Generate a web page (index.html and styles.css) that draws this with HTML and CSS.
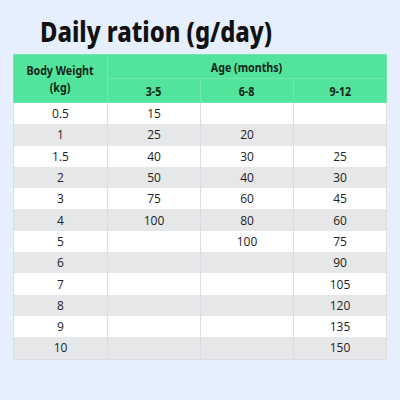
FILE: index.html
```html
<!DOCTYPE html>
<html lang="en">
<head>
    <meta charset="UTF-8">
    <meta name="viewport" content="width=device-width, initial-scale=1.0">
    <title>Daily ration</title>
    <link rel="stylesheet" href="styles.css">
</head>
<body>
    <div class="page">
        <h1 class="title"><span class="cond">Daily ration (g/day)</span></h1>
        <table class="ration">
            <thead>
                <tr>
                    <th rowspan="2" class="weight-head"><span class="cond">Body Weight<br>(kg)</span></th>
                    <th colspan="3"><span class="cond">Age (months)</span></th>
                </tr>
                <tr>
                    <th><span class="cond">3-5</span></th>
                    <th><span class="cond">6-8</span></th>
                    <th><span class="cond">9-12</span></th>
                </tr>
            </thead>
            <tbody>
                <tr><td>0.5</td><td>15</td><td></td><td></td></tr>
                <tr><td>1</td><td>25</td><td>20</td><td></td></tr>
                <tr><td>1.5</td><td>40</td><td>30</td><td>25</td></tr>
                <tr><td>2</td><td>50</td><td>40</td><td>30</td></tr>
                <tr><td>3</td><td>75</td><td>60</td><td>45</td></tr>
                <tr><td>4</td><td>100</td><td>80</td><td>60</td></tr>
                <tr><td>5</td><td></td><td>100</td><td>75</td></tr>
                <tr><td>6</td><td></td><td></td><td>90</td></tr>
                <tr><td>7</td><td></td><td></td><td>105</td></tr>
                <tr><td>8</td><td></td><td></td><td>120</td></tr>
                <tr><td>9</td><td></td><td></td><td>135</td></tr>
                <tr><td>10</td><td></td><td></td><td>150</td></tr>
            </tbody>
        </table>
    </div>
</body>
</html>
```

FILE: styles.css
```css
body {
    margin: 0;
    padding: 0;
    background-color: #e6effd;
    font-family: "Open Sans", "Noto Sans", sans-serif;
    color: #222;
}
.page {
    width: 400px;
    height: 400px;
    padding: 14px 13px 0;
    box-sizing: border-box;
}
.cond {
    display: inline-block;
    transform: scaleX(0.82);
}
.title {
    margin: 0 0 6px 27px;
    font-family: "Noto Sans", sans-serif;
    font-size: 29px;
    font-weight: 800;
    line-height: 34px;
    color: #111;
}
.title .cond {
    transform-origin: left center;
}
.ration {
    width: 374px;
    border-collapse: collapse;
    table-layout: fixed;
    font-size: 12px;
    border: 1px solid #dcdde0;
}
.ration th {
    background: #52e39d;
    color: #10261a;
    font-family: "Noto Sans", sans-serif;
    font-weight: 700;
    font-size: 13px;
    height: 23px;
    padding: 0;
    border: 1px solid #6ee8ad;
    white-space: nowrap;
}
.ration .weight-head {
    width: 93px;
    line-height: 17px;
}
.ration td {
    text-align: center;
    height: 21.3px;
    padding: 0;
    border-left: 1px solid #dcdde0;
    border-right: 1px solid #dcdde0;
    background: #fff;
}
.ration tbody tr:nth-child(even) td {
    background: #e6e7e9;
}
```
